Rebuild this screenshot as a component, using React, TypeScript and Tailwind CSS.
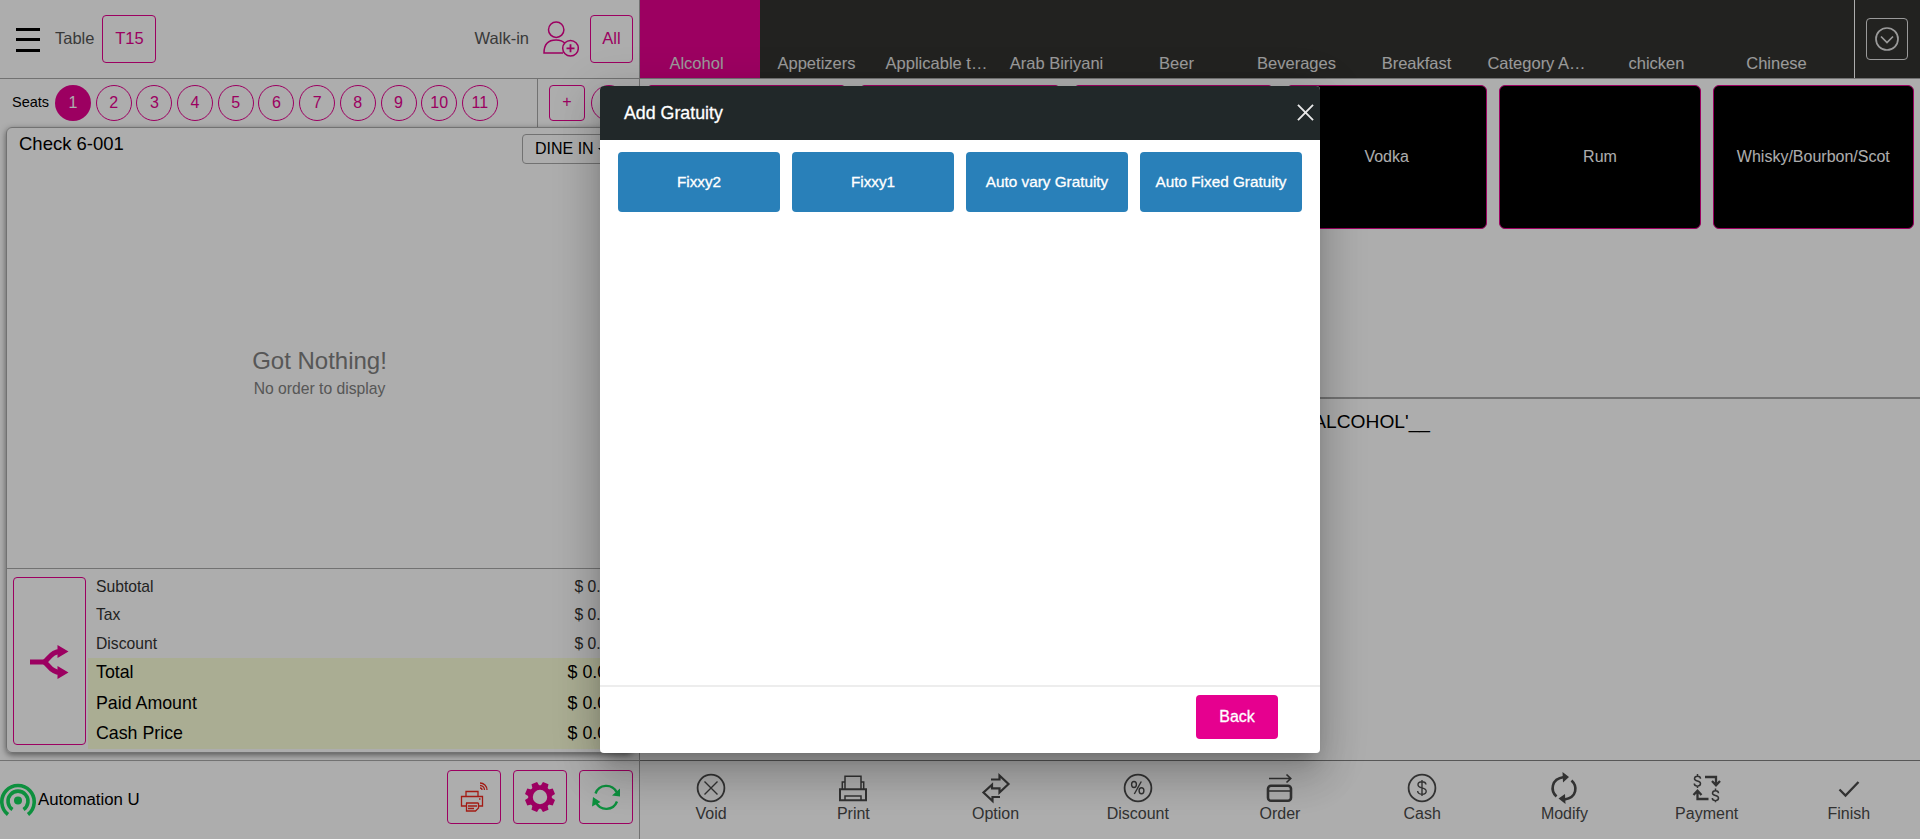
import React from 'react';

const seats = [1, 2, 3, 4, 5, 6, 7, 8, 9, 10, 11];
const tabs = ['Alcohol', 'Appetizers', 'Applicable t…', 'Arab Biriyani', 'Beer', 'Beverages', 'Breakfast', 'Category A…', 'chicken', 'Chinese'];
const tiles = ['', '', '', 'Vodka', 'Rum', 'Whisky/Bourbon/Scot'];
const gratuities = ['Fixxy2', 'Fixxy1', 'Auto vary Gratuity', 'Auto Fixed Gratuity'];

type IconProps = { children: React.ReactNode; className?: string; box?: string; sw?: number };

function Icon({ children, className = 'size-7', box = '0 0 28 28', sw = 1.8 }: IconProps) {
  return (
    <svg viewBox={box} className={`${className} shrink-0 overflow-visible`} fill="none" stroke="currentColor" strokeWidth={sw}>
      {children}
    </svg>
  );
}

const actions: { label: string; icon: React.ReactNode }[] = [
  {
    label: 'Void',
    icon: <Icon><circle cx="14" cy="14" r="13.4" /><path d="M7.5 7.5l13 13M20.5 7.5l-13 13" strokeWidth="1.4" /></Icon>,
  },
  {
    label: 'Print',
    icon: (
      <Icon sw={1.5}>
        <path d="M6 15V2.3h16V15M6 8H3.3v7M22 8h2.7v7" />
        <path d="M1 15.2h26v11H1z" strokeWidth="2" />
        <path d="M6 26v-4h16v4" />
      </Icon>
    ),
  },
  {
    label: 'Option',
    icon: (
      <Icon sw={2.2}>
        <path d="M9 5.5h8.5V1.5l9 8.5-9 8.5v-4.2H10v-3.6L1.5 18.500l9 8.500v-4H18" />
      </Icon>
    ),
  },
  {
    label: 'Discount',
    icon: (
      <Icon><circle cx="14" cy="14" r="13.4" />
        <g strokeWidth="1.4">
          <ellipse cx="10" cy="10.500" rx="2.400" ry="3" />
          <ellipse cx="17.500" cy="16.800" rx="2.400" ry="3" />
          <path d="M17.300 7.500l-7 12.500" />
        </g>
      </Icon>
    ),
  },
  {
    label: 'Order',
    icon: (
      <Icon sw={2.6}>
        <path d="M3 4.500h21.500M20.500.5l4.200 4-4.200 4" strokeWidth="1.700" />
        <rect x="2" y="11.800" width="23" height="15" rx="3" />
        <path d="M2 17h23" strokeWidth="1.500" />
      </Icon>
    ),
  },
  {
    label: 'Cash',
    icon: (
      <Icon><circle cx="14" cy="14" r="13.4" />
        <path d="M18 10.500c-.3-1.700-1.700-2.700-4-2.700s-4 1-4 2.900c0 4.300 8.200 2 8.200 6.500 0 2-1.800 3-4.200 3-2.500 0-4.200-1.200-4.400-3.200M14 6v16" strokeWidth="1.400" />
      </Icon>
    ),
  },
  {
    label: 'Modify',
    icon: (
      <Icon sw={2.6}>
        <path d="M6.500 22.500C.5 17 .5 5 14 3M21.500 6.500c6 5.500 6 17-7 19" />
        <path d="M12.500-2l6.500 5-6 5.500zM15.500 30l-7-5.500 6.500-4.500z" fill="currentColor" stroke="none" />
      </Icon>
    ),
  },
  {
    label: 'Payment',
    icon: (
      <Icon sw={1.5}>
        <path d="M7.500 4.800c0-3.500-6-3.500-6 0 0 3 6 1.500 6 4.800 0 3.400-6.200 3.400-6.200 0M4.500 0v2.200M4.500 12v2M25.500 19.300c0-3.500-6-3.500-6 0 0 3 6 1.500 6 4.800 0 3.400-6.200 3.400-6.200 0M22.500 14.500v2.200M22.500 26.500v1.800" />
        <path d="M12 3h11v8M19 7l4 4.300L27 7M15.500 25h-11v-8M.5 21l4-4.300 4 4.300" strokeWidth="2.300" />
      </Icon>
    ),
  },
  { label: 'Finish', icon: <Icon sw={2.3}><path d="M4.500 15.500l6 6L23.500 8" /></Icon> },
];

function SummaryRow({ label, value, big }: { label: string; value: string; big?: boolean }) {
  return (
    <div className={big ? 'flex h-[30.5px] items-center justify-between bg-[#fbffd9] pr-[15px] pb-px pl-2 text-[17.8px] text-black' : 'flex h-[28.6px] items-center justify-between pr-[14px] pl-2 text-[15.7px] text-[#333]'}>
      <span>{label}</span>
      <span>{value}</span>
    </div>
  );
}

function OrderPanel() {
  return (
    <div className="flex h-full w-[640px] flex-col border-r border-[#a8a8a8]">
      <div className="flex h-[79px] shrink-0 items-center border-b border-[#a8a8a8] pb-px pr-[6px] pl-4 text-[16.5px]">
        <div className="mt-0.5 flex h-6 w-6 flex-col justify-between">
          <span className="h-[3px] bg-black" />
          <span className="h-[3px] bg-black" />
          <span className="h-[3px] bg-black" />
        </div>
        <span className="ml-[15px] text-[#555]">Table</span>
        <button className="ml-2 h-12 w-[54px] rounded border border-[#e6008f] text-[#e6008f]">T15</button>
        <span className="ml-auto text-[#555]">Walk-in</span>
        <svg viewBox="0 0 36 36" className="ml-[14px] size-9 text-[#e6008f]" fill="none" stroke="currentColor" strokeWidth="1.5">
          <circle cx="13.2" cy="8.700" r="7.700" />
          <path d="M20 32H1c0-8 4-13 12-13 4 0 7 1 9 3.500" />
          <circle cx="27.500" cy="27.300" r="7.800" />
          <path d="M27.500 23.300v8M23.500 27.300h8" strokeWidth="1.800" />
        </svg>
        <button className="ml-[11px] h-12 w-[43px] rounded border border-[#e6008f] text-[#e6008f]">All</button>
      </div>

      <div className="flex h-12 shrink-0 items-center pl-3">
        <span className="w-[43px] text-[14.5px] text-black">Seats</span>
        <div className="flex gap-[4.7px] text-[16px]">
          {seats.map((s) => (
            <span key={s} className={s === 1 ? 'flex size-9 items-center justify-center rounded-full bg-[#e6008f] text-white' : 'flex size-9 items-center justify-center rounded-full border border-[#e6008f] text-[#e6008f]'}>
              {s}
            </span>
          ))}
        </div>
        <div className="ml-auto flex h-full w-[102px] items-center gap-[6px] border-l border-[#a8a8a8] pl-[11px] text-[#e6008f]">
          <span className="flex size-9 items-center justify-center rounded border border-[#e6008f] pb-0.5">+</span>
          <span className="flex size-9 items-center justify-center rounded-full border border-[#e6008f]">1</span>
        </div>
      </div>

      <div className="mr-[6px] ml-[6px] flex h-[626px] shrink-0 flex-col rounded-md border border-[#a8a8a8] shadow-[0_2px_6px_rgba(0,0,0,0.5)]">
        <div className="flex h-9 items-start justify-between pl-3">
          <span className="mt-1 text-[18.5px] leading-6 text-black">Check 6-001</span>
          <span className="mt-[6px] flex h-[30px] w-[110px] items-center gap-1 rounded border border-[#a8a8a8] pl-3 text-[16px] text-black">
            DINE IN <span className="mt-0.5 border-x-4 border-t-4 border-x-transparent border-t-black" />
          </span>
        </div>
        <div className="flex flex-1 flex-col items-center justify-center pt-[14px] text-[#808080]">
          <span className="text-[24px] leading-8">Got Nothing!</span>
          <span className="text-[15.7px] leading-6">No order to display</span>
        </div>
        <div className="flex h-[184px] border-t border-[#a8a8a8] pt-2 pl-[6px]">
          <div className="flex h-[168px] w-[73px] shrink-0 items-center justify-center rounded border border-[#e6008f] pt-0.5 pr-0.5 text-[#e6008f]">
            <svg viewBox="0 0 38 32" className="h-8 w-[38px] overflow-visible" fill="none" stroke="currentColor" strokeWidth="5">
              <path d="M0 16h14M13 16c5 0 6-10 17-10.500M13 16c5 0 6 10 17 10.500" />
              <path d="M27.500-1L38.500 5.500 27.500 12zM27.500 20L38.500 26.500 27.500 33z" fill="currentColor" stroke="none" />
            </svg>
          </div>
          <div className="-mt-[5px] ml-0.5 flex-1">
            <SummaryRow label="Subtotal" value="$ 0.00" />
            <SummaryRow label="Tax" value="$ 0.00" />
            <SummaryRow label="Discount" value="$ 0.00" />
            <SummaryRow label="Total" value="$ 0.00" big />
            <SummaryRow label="Paid Amount" value="$ 0.00" big />
            <SummaryRow label="Cash Price" value="$ 0.00" big />
          </div>
        </div>
      </div>

      <div className="mt-[7px] flex flex-1 items-center border-t border-[#a8a8a8] pb-[7px] pr-[6px]">
        <svg viewBox="0 0 36 36" className="mt-[6px] size-9 text-[#14d45c]" fill="none" stroke="currentColor" strokeWidth="3.6">
          <path d="M8 32.500A16.200 16.200 0 1 1 28 32.500" />
          <path d="M12.500 27.500A10 10 0 1 1 23.500 27.500" />
          <circle cx="18" cy="18.500" r="4" fill="currentColor" stroke="none" />
        </svg>
        <span className="mt-[6px] ml-0.5 text-[16.8px] text-black">Automation U</span>
        <div className="ml-auto flex gap-3">
          <span className="flex size-[54px] items-center justify-center rounded border border-[#e6008f] text-[#f0281e]">
            <svg viewBox="0 0 28 30" className="h-[30px] w-7" fill="none" stroke="currentColor" strokeWidth="1.3">
              <path d="M6 14V9.500h12V14M6 24H1.500v-9.500h21V24H18M6 21h12.500M6.500 21v8h9l3-3v-5M8 24h9M8 26.500h6M19 17h1.500" />
              <path d="M20 6a2 2 0 0 1 2 2M20 3.500A4.500 4.500 0 0 1 24.500 8M20 1a7 7 0 0 1 7 7" />
            </svg>
          </span>
          <span className="flex size-[54px] items-center justify-center rounded border border-[#e6008f] text-[#e6008f]">
            <svg viewBox="-15 -15 30 30" className="size-[30px]">
              <circle r="9.5" fill="none" stroke="currentColor" strokeWidth="4.6" />
              <g fill="currentColor">
                {[22.5, 67.5, 112.5, 157.5, 202.5, 247.5, 292.5, 337.5].map((a) => (
                  <path key={a} d="M-3.800-10l.8-5h6l.8 5z" transform={`rotate(${a})`} />
                ))}
              </g>
            </svg>
          </span>
          <span className="flex size-[54px] items-center justify-center rounded border border-[#e6008f] text-[#14d45c]">
            <svg viewBox="0 0 28 28" className="size-7 overflow-visible" fill="none" stroke="currentColor" strokeWidth="2.4">
              <path d="M3.500 10.500a11.500 11.500 0 0 1 21-1.500M25 18.500A11.500 11.500 0 0 1 4 19.500" />
              <path d="M28 5.500v8l-8-1zM0 23.500l1-9.500 7.500 5z" fill="currentColor" stroke="none" />
            </svg>
          </span>
        </div>
      </div>
    </div>
  );
}

function MenuPanel() {
  return (
    <div className="flex h-full flex-1 flex-col">
      <div className="flex h-[79px] shrink-0 border-b border-[#a8a8a8] bg-[#333330] text-[16.5px] text-[#e4e4e4]">
        {tabs.map((t, i) => (
          <div key={t} className={i === 0 ? 'flex w-[120px] items-end justify-center bg-[#e6008f] pr-[7px] pb-[2px]' : 'flex w-[120px] items-end justify-center pr-[7px] pb-[2px]'}>
            {t}
          </div>
        ))}
        <div className="ml-auto flex w-[66px] items-center justify-center border-l border-white pr-0.5">
          <span className="flex size-[42px] items-center justify-center rounded border border-[#e4e4e4]">
            <Icon className="size-6" box="0 0 24 24" sw={1.7}><circle cx="12" cy="12" r="11" /><path d="M6 9.500l6 6 6-6" /></Icon>
          </span>
        </div>
      </div>
      <div className="grid h-[318px] shrink-0 grid-cols-6 gap-3 px-[6px] pt-[6px]">
        {tiles.map((t, i) => (
          <div key={i} className="flex h-36 items-center justify-center rounded-md border border-[#e6008f] bg-black text-[16px] text-white">
            {t}
          </div>
        ))}
      </div>
      <div className="flex flex-1 items-start justify-end border-t-2 border-[#a8a8a8] pt-[9px] pr-[490px] text-[19.2px] text-black">
        'ALCOHOL'__
      </div>
      <div className="grid h-[79px] shrink-0 grid-cols-9 border-t border-[#808080] text-[16px] text-[#4a4a4a]">
        {actions.map((a) => (
          <div key={a.label} className="flex flex-col items-center pt-[13px]">
            {a.icon}
            <span className="leading-6">{a.label}</span>
          </div>
        ))}
      </div>
    </div>
  );
}

function GratuityDialog() {
  return (
    <div className="flex h-[667px] w-[720px] flex-col overflow-hidden rounded bg-white">
      <div className="flex h-[54px] items-center justify-between bg-[#212829] pr-[6px] pl-6 text-white">
        <h2 className="text-[17.8px] font-normal [-webkit-text-stroke:0.3px_currentColor]">Add Gratuity</h2>
        <svg viewBox="0 0 18 18" className="-mt-0.5 size-[17px] text-[#e8e8e8]" stroke="currentColor" strokeWidth="2">
          <path d="M1 1l16 16M17 1L1 17" />
        </svg>
      </div>
      <div className="grid flex-1 grid-cols-4 content-start gap-3 px-[18px] pt-3">
        {gratuities.map((g) => (
          <button key={g} className="h-[60px] rounded bg-[#2980b9] text-[15.3px] text-white [-webkit-text-stroke:0.3px_currentColor]">{g}</button>
        ))}
      </div>
      <div className="flex h-[68px] justify-end border-t-2 border-[#ededed] pt-[8px] pr-[42px]">
        <button className="h-11 w-[82px] rounded bg-[#e6008f] text-[16px] text-white [-webkit-text-stroke:0.3px_currentColor]">Back</button>
      </div>
    </div>
  );
}

export default function App() {
  return (
    <div className="relative h-[839px] w-[1920px] overflow-hidden bg-white font-['Liberation_Sans',Arial,sans-serif]">
      <div className="flex h-full">
        <OrderPanel />
        <MenuPanel />
      </div>
      <div className="absolute inset-0 flex items-center justify-center bg-black/32">
        <div className="rounded shadow-[0_11px_15px_-7px_rgba(0,0,0,0.2),0_24px_38px_3px_rgba(0,0,0,0.14),0_9px_46px_8px_rgba(0,0,0,0.12)]">
          <GratuityDialog />
        </div>
      </div>
    </div>
  );
}
